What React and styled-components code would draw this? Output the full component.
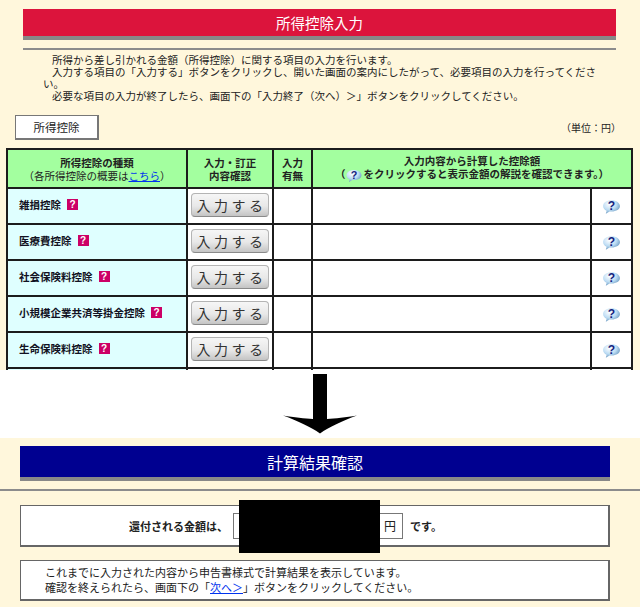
import React from 'react';
import styled, { createGlobalStyle } from 'styled-components';

const GlobalStyle = createGlobalStyle`
  html, body {
    margin: 0;
    padding: 0;
    background: #fff;
    font-family: "Noto Sans CJK JP", "Liberation Sans", sans-serif;
    color: #222;
  }
`;

const Page = styled.div`
  width: 640px;
  height: 607px;
  overflow: hidden;
`;

const InputSection = styled.section`
  height: 370px;
  padding-top: 9px;
  box-sizing: border-box;
  overflow: hidden;
  background: #fff7dc;
`;

const TitleBar = styled.h1`
  display: flex;
  align-items: center;
  justify-content: center;
  box-sizing: border-box;
  height: ${({ $height }) => $height}px;
  margin: 0 ${({ $right }) => $right}px 0 ${({ $left }) => $left}px;
  border-bottom: 4px solid #888;
  background: ${({ $color }) => $color};
  color: #fff;
  font-size: ${({ $size }) => $size}px;
  font-weight: 400;
`;

const Rule = styled.hr`
  height: 2px;
  margin: ${({ $margin }) => $margin};
  border: 0;
  background: #8c8c8c;
`;

const Intro = styled.div`
  margin: 4px 40px 0 43px;
  font-size: 10.5px;
  line-height: 12px;
`;

const IntroLine = styled.p`
  margin: 0;
  text-indent: 9px;
`;

const Toolbar = styled.div`
  display: flex;
  align-items: center;
  justify-content: space-between;
  margin: 13px 19px 8px 15px;
`;

const SectionTag = styled.div`
  display: flex;
  align-items: center;
  justify-content: center;
  box-sizing: border-box;
  width: 84px;
  height: 25px;
  border: 1px solid #777;
  border-right-width: 2px;
  border-bottom-width: 2px;
  background: #fff;
  font-size: 11.5px;
`;

const Unit = styled.span`
  font-size: 10px;
`;

const Table = styled.table`
  width: 627px;
  margin-left: 6px;
  border-collapse: collapse;
  table-layout: fixed;

  td, th {
    padding: 0;
    border: 2px solid #1c1c1c;
  }
`;

const HeadRow = styled.tr`
  height: 39px;
  background: #a3ff9f;
`;

const HeadCell = styled.th`
  font-size: 10.5px;
  font-weight: 700;
  line-height: 13px;
  text-align: center;
`;

const HeadNote = styled.span`
  font-weight: 400;
`;

const HeadLink = styled.a`
  color: #0033ee;
  text-decoration: underline;
`;

const Row = styled.tr`
  height: 36px;
  background: #fff;

  td {
    padding-bottom: 3px;
  }
`;

const NameCell = styled.td`
  background: #dfffff;
  font-size: 10.5px;
  font-weight: 700;
  color: #112;
`;

const NameInner = styled.div`
  display: flex;
  align-items: center;
  gap: 6px;
  padding-left: 11px;
`;

const QuestionMark = styled.span`
  display: inline-flex;
  align-items: center;
  justify-content: center;
  width: 11px;
  height: 11px;
  background: #cc0066;
  color: #fff;
  font-family: "Liberation Sans", sans-serif;
  font-size: 10px;
  font-weight: 700;
  line-height: 1;
`;

const ActionCell = styled.td`
  text-align: center;
`;

const EnterButton = styled.button`
  display: block;
  width: 78px;
  height: 24px;
  margin: 0 auto;
  padding: 0 0 0 3px;
  border: 1px solid #b4b4b4;
  border-bottom-color: #8a8a8a;
  border-radius: 4px;
  background: linear-gradient(#f6f6f6, #e8e8e8 55%, #c4c4c4);
  color: #333;
  font-family: inherit;
  font-size: 14px;
  letter-spacing: 3.5px;
  line-height: 1;
`;

const HelpCell = styled.td`
  text-align: center;
`;

const BubbleIcon = ({ width = 19, height = 16 }) => (
  <svg width={width} height={height} viewBox="0 0 18 15" style={{ verticalAlign: 'middle' }}>
    <defs>
      <radialGradient id="bubble" cx="38%" cy="30%" r="75%">
        <stop offset="0%" stopColor="#fff" />
        <stop offset="55%" stopColor="#bcdcf4" />
        <stop offset="100%" stopColor="#5f8fb8" />
      </radialGradient>
    </defs>
    <path d="M9 1C4.200 1 1 3.400 1 6.600c0 2 1.400 3.600 3.400 4.500L3.600 14l3.600-2.300c.6.100 1.200.100 1.800.100 4.600 0 8-2.200 8-5.200S13.600 1 9 1z" fill="url(#bubble)" />
    <text x="9" y="10.500" textAnchor="middle" fontFamily="Liberation Sans, sans-serif" fontWeight="700" fontSize="11.500" fill="#14237e">?</text>
  </svg>
);

const Arrow = styled.div`
  display: flex;
  justify-content: center;
  height: 68px;
  background: #fff;
`;

const ResultSection = styled.section`
  height: 169px;
  padding-top: 8px;
  box-sizing: border-box;
  background: #fff7dc;
`;

const Panel = styled.div`
  position: relative;
  box-sizing: border-box;
  height: ${({ $height }) => $height}px;
  margin: 0 30px ${({ $gap }) => $gap}px 20px;
  border: 1px solid #666;
  border-right-width: 2px;
  border-bottom-width: 2px;
  background: #fff;
`;

const RefundRow = styled(Panel)`
  display: flex;
  align-items: center;
  padding-left: 108px;
  font-weight: 700;
  font-size: 11px;
`;

const AmountBox = styled.div`
  display: flex;
  align-items: center;
  justify-content: flex-end;
  box-sizing: border-box;
  width: 170px;
  height: 26px;
  margin: 0 7px 0 5px;
  padding-right: 6px;
  border: 1px solid #777;
  font-weight: 400;
  font-size: 12px;
`;

const Redaction = styled.div`
  position: absolute;
  left: 218px;
  top: -6px;
  width: 141px;
  height: 53px;
  background: #000;
`;

const NoticeBox = styled(Panel)`
  padding: 4px 0 0 24px;
  line-height: 15px;
  font-size: 11px;
`;

const NoticeLink = styled.a`
  color: #0033ee;
  text-decoration: underline;
`;

const deductions = [
  '雑損控除',
  '医療費控除',
  '社会保険料控除',
  '小規模企業共済等掛金控除',
  '生命保険料控除',
];

const App = () => {
  return (
    <Page>
      <GlobalStyle />
      <InputSection>
        <TitleBar $height={31} $left={23} $right={24} $size={14.5} $color="#dc143c">所得控除入力</TitleBar>
        <Rule $margin="8px 24px 0 23px" />
        <Intro>
          <IntroLine>所得から差し引かれる金額（所得控除）に関する項目の入力を行います。</IntroLine>
          <IntroLine>入力する項目の「入力する」ボタンをクリックし、開いた画面の案内にしたがって、必要項目の入力を行ってください。</IntroLine>
          <IntroLine>必要な項目の入力が終了したら、画面下の「入力終了（次へ）＞」ボタンをクリックしてください。</IntroLine>
        </Intro>
        <Toolbar>
          <SectionTag>所得控除</SectionTag>
          <Unit>（単位：円）</Unit>
        </Toolbar>
        <Table>
          <colgroup>
            <col width="180" />
            <col width="86" />
            <col width="39" />
            <col width="279" />
            <col width="41" />
          </colgroup>
          <thead>
            <HeadRow>
              <HeadCell>
                所得控除の種類<br />
                <HeadNote>（各所得控除の概要は<HeadLink href="#">こちら</HeadLink>）</HeadNote>
              </HeadCell>
              <HeadCell>入力・訂正<br />内容確認</HeadCell>
              <HeadCell>入力<br />有無</HeadCell>
              <HeadCell colSpan={2}>
                入力内容から計算した控除額<br />
                （<BubbleIcon width={18} height={14} />をクリックすると表示金額の解説を確認できます。）
              </HeadCell>
            </HeadRow>
          </thead>
          <tbody>
            {deductions.map((name) => (
              <Row key={name}>
                <NameCell>
                  <NameInner>{name}<QuestionMark>?</QuestionMark></NameInner>
                </NameCell>
                <ActionCell><EnterButton type="button">入力する</EnterButton></ActionCell>
                <td />
                <td />
                <HelpCell><BubbleIcon /></HelpCell>
              </Row>
            ))}
            <Row>
              <NameCell />
              <td />
              <td />
              <td />
              <td />
            </Row>
          </tbody>
        </Table>
      </InputSection>
      <Arrow>
        <svg width="76" height="62" viewBox="0 0 76 62" style={{ marginTop: 4 }}>
          <path d="M31 0h14v45c8-.5 19-1.500 30-3.500C60 47 47 53 38 59.500 29 53 16 47 1 41.500c11 2 22 3 30 3.500z" fill="#000" />
        </svg>
      </Arrow>
      <ResultSection>
        <TitleBar $height={35} $left={20} $right={30} $size={16} $color="#000090">計算結果確認</TitleBar>
        <Rule $margin="8px 0 14px" />
        <RefundRow $height={42} $gap={13}>
          還付される金額は、
          <AmountBox>円</AmountBox>
          です。
          <Redaction />
        </RefundRow>
        <NoticeBox $height={41} $gap={0}>
          これまでに入力された内容から申告書様式で計算結果を表示しています。<br />
          確認を終えられたら、画面下の「<NoticeLink href="#">次へ＞</NoticeLink>」ボタンをクリックしてください。
        </NoticeBox>
      </ResultSection>
    </Page>
  );
};

export default App;
